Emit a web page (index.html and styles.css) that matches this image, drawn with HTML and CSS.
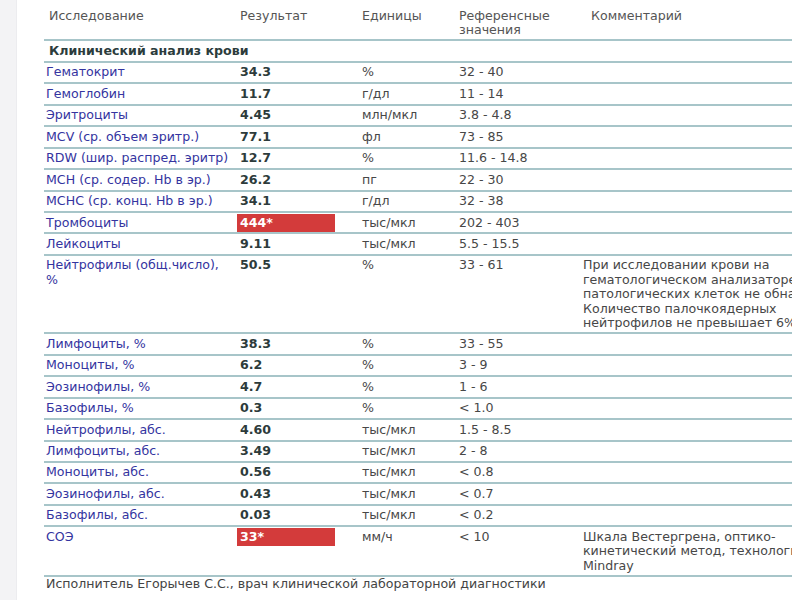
FILE: index.html
```html
<!DOCTYPE html>
<html lang="ru">
<head>
<meta charset="utf-8">
<link rel="stylesheet" href="styles.css">
</head>
<body>
<div class="page">
  <div class="strip"></div>
  <div class="content">
    <table class="results">
      <colgroup>
        <col class="c-name"><col class="c-res"><col class="c-unit"><col class="c-ref"><col class="c-com">
      </colgroup>
      <thead>
        <tr class="head">
          <th class="h-name">Исследование</th>
          <th class="h-res">Результат</th>
          <th>Единицы</th>
          <th>Референсные<br>значения</th>
          <th class="h-com">Комментарий</th>
        </tr>
      </thead>
      <tbody>
        <tr class="section"><td colspan="5">Клинический анализ крови</td></tr>
        <tr><td class="name">Гематокрит</td><td class="res"><span class="val">34.3</span></td><td>%</td><td>32 - 40</td><td></td></tr>
        <tr><td class="name">Гемоглобин</td><td class="res"><span class="val">11.7</span></td><td>г/дл</td><td>11 - 14</td><td></td></tr>
        <tr><td class="name">Эритроциты</td><td class="res"><span class="val">4.45</span></td><td>млн/мкл</td><td>3.8 - 4.8</td><td></td></tr>
        <tr><td class="name">MCV (ср. объем эритр.)</td><td class="res"><span class="val">77.1</span></td><td>фл</td><td>73 - 85</td><td></td></tr>
        <tr><td class="name">RDW (шир. распред. эритр)</td><td class="res"><span class="val">12.7</span></td><td>%</td><td>11.6 - 14.8</td><td></td></tr>
        <tr><td class="name">MCH (ср. содер. Hb в эр.)</td><td class="res"><span class="val">26.2</span></td><td>пг</td><td>22 - 30</td><td></td></tr>
        <tr><td class="name">MCHC (ср. конц. Hb в эр.)</td><td class="res"><span class="val">34.1</span></td><td>г/дл</td><td>32 - 38</td><td></td></tr>
        <tr><td class="name">Тромбоциты</td><td class="res"><span class="val flag">444*</span></td><td>тыс/мкл</td><td>202 - 403</td><td></td></tr>
        <tr><td class="name">Лейкоциты</td><td class="res"><span class="val">9.11</span></td><td>тыс/мкл</td><td>5.5 - 15.5</td><td></td></tr>
        <tr><td class="name">Нейтрофилы (общ.число),<br>%</td><td class="res"><span class="val">50.5</span></td><td>%</td><td>33 - 61</td><td class="com">При исследовании крови на<br>гематологическом анализаторе<br>патологических клеток не обнаружено.<br>Количество палочкоядерных<br>нейтрофилов не превышает 6%</td></tr>
        <tr><td class="name">Лимфоциты, %</td><td class="res"><span class="val">38.3</span></td><td>%</td><td>33 - 55</td><td></td></tr>
        <tr><td class="name">Моноциты, %</td><td class="res"><span class="val">6.2</span></td><td>%</td><td>3 - 9</td><td></td></tr>
        <tr><td class="name">Эозинофилы, %</td><td class="res"><span class="val">4.7</span></td><td>%</td><td>1 - 6</td><td></td></tr>
        <tr><td class="name">Базофилы, %</td><td class="res"><span class="val">0.3</span></td><td>%</td><td>&lt; 1.0</td><td></td></tr>
        <tr><td class="name">Нейтрофилы, абс.</td><td class="res"><span class="val">4.60</span></td><td>тыс/мкл</td><td>1.5 - 8.5</td><td></td></tr>
        <tr><td class="name">Лимфоциты, абс.</td><td class="res"><span class="val">3.49</span></td><td>тыс/мкл</td><td>2 - 8</td><td></td></tr>
        <tr><td class="name">Моноциты, абс.</td><td class="res"><span class="val">0.56</span></td><td>тыс/мкл</td><td>&lt; 0.8</td><td></td></tr>
        <tr><td class="name">Эозинофилы, абс.</td><td class="res"><span class="val">0.43</span></td><td>тыс/мкл</td><td>&lt; 0.7</td><td></td></tr>
        <tr><td class="name">Базофилы, абс.</td><td class="res"><span class="val">0.03</span></td><td>тыс/мкл</td><td>&lt; 0.2</td><td></td></tr>
        <tr><td class="name">СОЭ</td><td class="res"><span class="val flag">33*</span></td><td>мм/ч</td><td>&lt; 10</td><td class="com">Шкала Вестергрена, оптико-<br>кинетический метод, технология<br>Mindray</td></tr>
      </tbody>
    </table>
    <p class="footer">Исполнитель Егорычев С.С., врач клинической лабораторной диагностики</p>
  </div>
</div>
</body>
</html>
```
FILE: styles.css
```css
html, body {
  margin: 0;
  padding: 0;
  background: #ffffff;
  overflow: hidden;
}
body {
  font-family: "DejaVu Sans", Verdana, sans-serif;
  font-size: 12.6px;
  line-height: 14.5px;
  color: #474747;
}
.page {
  display: flex;
  width: 792px;
  height: 600px;
  overflow: hidden;
}
.strip {
  flex: 0 0 16px;
  background: #f3f3f5;
  border-right: 1px solid #ececef;
}
.content {
  flex: 0 0 auto;
  padding-left: 27px;
}
.results {
  border-collapse: collapse;
  table-layout: fixed;
  width: 900px;
}
.c-name { width: 193px; }
.c-res { width: 122px; }
.c-unit { width: 97px; }
.c-ref { width: 124px; }
.c-com { width: 364px; }
.results th {
  font-weight: normal;
  text-align: left;
  vertical-align: top;
  color: #555555;
  padding: 8.5px 3px 1.5px 3px;
  border-bottom: 2px solid #a7c5c9;
}
.results th.h-name { padding-left: 5px; }
.results th.h-res { padding-left: 3px; }
.results th.h-com { padding-left: 11px; }
.results td {
  padding: 2.47px 3px 2.47px 3px;
  vertical-align: top;
  border-bottom: 2px solid #a7c5c9;
  white-space: nowrap;
  color: #474747;
}
.results tr.section td {
  font-weight: bold;
  color: #2c3c3c;
  padding-left: 5px;
  padding-top: 3px;
}
.results td.name {
  color: #3434a0;
  padding-left: 2px;
}
.results td.res {
  padding-left: 0;
  padding-top: 0.97px;
  padding-bottom: 0.97px;
}
.val {
  display: inline-block;
  width: 98px;
  box-sizing: border-box;
  padding: 1.5px 3px;
  font-weight: bold;
  color: #2d3b3b;
}
.val.flag {
  background: #d33b3b;
  color: #ffffff;
}
.results td.com {
  color: #474747;
  padding-bottom: 1.5px;
}
.footer {
  margin: 0;
  padding: 0 0 0 2px;
  color: #444444;
}
```
